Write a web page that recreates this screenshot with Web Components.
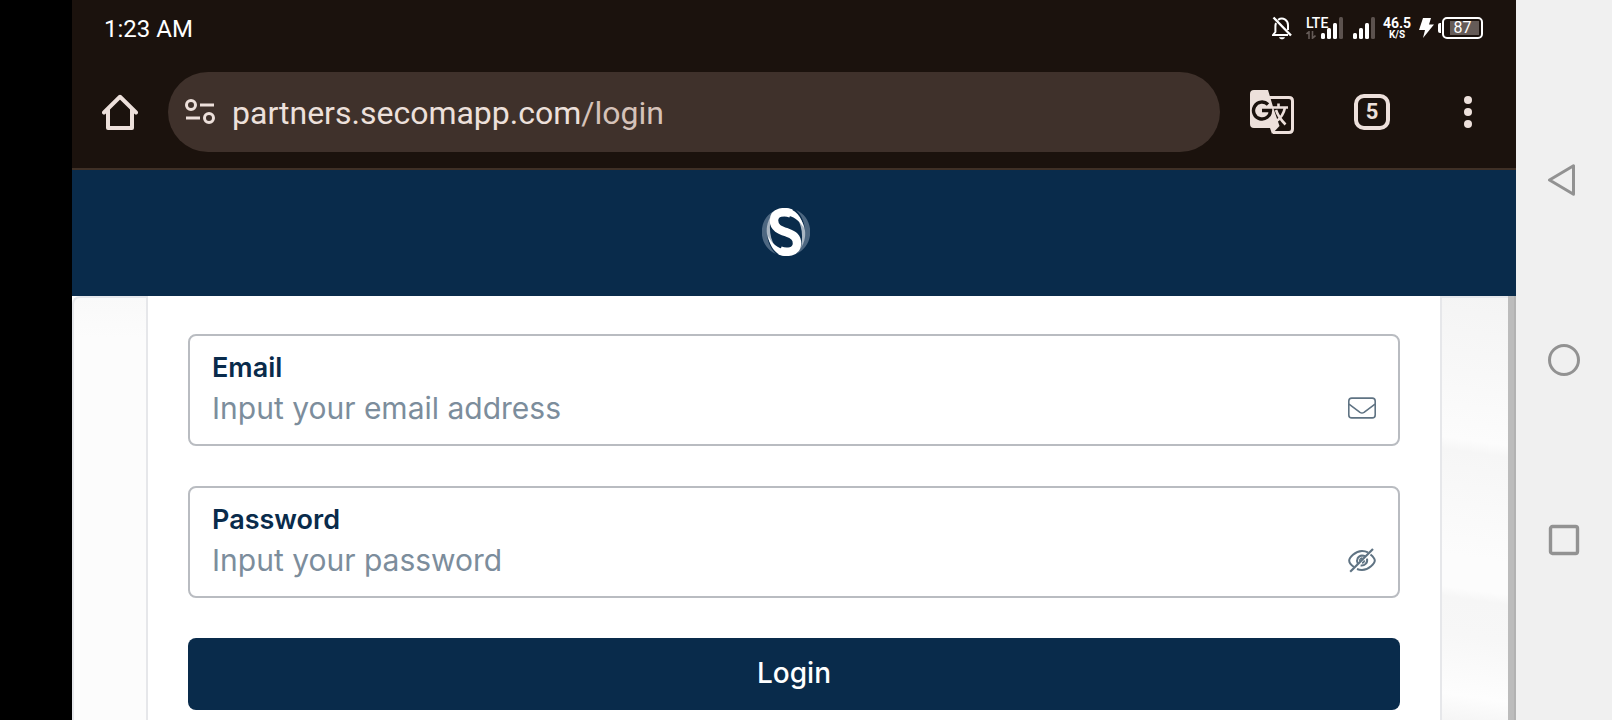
<!DOCTYPE html>
<html lang="en">
<head>
<meta charset="utf-8">
<meta name="viewport" content="width=device-width, initial-scale=1">
<title>Partners login</title>
<style>
    html, body {
        height: 100%;
        margin: 0;
        overflow: hidden;
    }
    body {
        font-family: Roboto, "Liberation Sans", sans-serif;
    }
</style>
</head>
<body>
<phone-frame>
    <status-bar time="1:23 AM" battery="87"></status-bar>
    <browser-toolbar host="partners.secomapp.com" path="/login" tabs="5"></browser-toolbar>
    <site-header></site-header>
    <login-page>
        <text-field name="email" type="email" label="Email" placeholder="Input your email address">
            <svg slot="icon" width="28" height="28" viewBox="0 0 28 28" fill="none" stroke="#5f7383" stroke-width="1.6" stroke-linejoin="round" aria-hidden="true">
                <rect x="0.8" y="4.1" width="26.4" height="19.8" rx="3"/>
                <path d="M1 10.2 L12 18.3 Q14 19.6 16 18.3 L27 10.2"/>
            </svg>
        </text-field>
        <text-field name="password" type="password" label="Password" placeholder="Input your password">
            <svg slot="icon" width="28" height="28" viewBox="0 0 28 28" fill="none" stroke="#5f7383" stroke-width="2" aria-hidden="true">
                <path d="M6 21 C3 19 1.2 16 1.2 14.5 C1.2 12 7 5 14 5 C16.4 5 18.5 5.600 20 6.400"/>
                <path d="M22.500 8.400 C25.300 10.700 26.800 13.200 26.800 14.500 C26.800 17 21 24 14 24 C12 24 10.400 23.600 9 23"/>
                <path d="M9.800 17.600 C7.800 14 10 9.600 14 9.400 C15 9.400 16 9.600 17 10.200"/>
                <path d="M19 12.600 C20 17 16.500 20 12.600 19.400"/>
                <path d="M11.800 14.800 C11.600 13 13 12 14.400 12.200 M16.400 14.400 C16.300 16 15.200 16.800 14 16.900" stroke-width="1.600"/>
                <path d="M2.200 25.800 L25 3" stroke-width="2.200"/>
            </svg>
        </text-field>
        <submit-button>Login</submit-button>
    </login-page>
    <system-nav slot="nav"></system-nav>
</phone-frame>

<script>
    class PhoneFrame extends HTMLElement {
        connectedCallback() {
            this.attachShadow({ mode: "open" });
            this.render();
        }
        render() {
            this.shadowRoot.innerHTML = `
                <style>
                    :host {
                        display: flex;
                        height: 100%;
                        padding-left: 72px;
                        box-sizing: border-box;
                        background: #000;
                    }
                    main {
                        flex: 1;
                        min-width: 0;
                        display: flex;
                        flex-direction: column;
                    }
                </style>
                <main><slot></slot></main>
                <slot name="nav"></slot>
            `;
        }
    }

    class StatusBar extends HTMLElement {
        connectedCallback() {
            this.attachShadow({ mode: "open" });
            this.render();
        }
        // last bar is always dimmed: three out of four
        bars() {
            return `
                <svg width="22" height="22" viewBox="0 0 22 22" aria-hidden="true">
                    <rect x="0" y="16" width="4" height="6" rx="1.5" fill="#fff"/>
                    <rect x="6" y="11" width="4" height="11" rx="1.5" fill="#fff"/>
                    <rect x="12" y="6" width="4" height="16" rx="1.5" fill="#fff"/>
                    <rect x="18" y="0" width="4" height="22" rx="1.5" fill="#5c524e"/>
                </svg>
            `;
        }
        render() {
            const time = this.getAttribute("time") ?? "";
            const battery = this.getAttribute("battery") ?? "";
            this.shadowRoot.innerHTML = `
                <style>
                    :host {
                        display: flex;
                        align-items: center;
                        justify-content: space-between;
                        height: 56px;
                        padding: 0 33px 0 32px;
                        background: #1b120d;
                        color: #fff;
                    }
                    svg {
                        display: block;
                    }
                    time {
                        padding-top: 2px;
                        font-size: 24px;
                        line-height: 28px;
                    }
                    .icons {
                        display: flex;
                        align-items: center;
                        gap: 8px;
                    }
                    .lte {
                        display: flex;
                        align-items: flex-end;
                        margin: 0 2px 0 6px;
                    }
                    .stack {
                        display: flex;
                        flex-direction: column;
                        gap: 2px;
                        font-size: 14px;
                        line-height: 12px;
                        font-weight: 700;
                    }
                    .lte .stack {
                        width: 15px;
                        font-weight: 500;
                    }
                    .speed {
                        align-items: center;
                        width: 28px;
                        gap: 0;
                        line-height: 14px;
                    }
                    .speed small {
                        font-size: 10px;
                        line-height: 10px;
                    }
                    .power {
                        display: flex;
                        align-items: center;
                        gap: 4px;
                    }
                    .battery {
                        display: flex;
                        align-items: center;
                        gap: 1px;
                    }
                    .battery::before {
                        content: "";
                        width: 3px;
                        height: 10px;
                        border-radius: 2px 0 0 2px;
                        background: #fff;
                    }
                    .battery span {
                        width: 37px;
                        height: 18px;
                        border: 2px solid #fff;
                        border-radius: 5px;
                        background: linear-gradient(#655b57, #655b57) 6px 2px / 29px 14px no-repeat;
                        font-size: 16px;
                        line-height: 18px;
                        text-align: center;
                    }
                </style>
                <time>${time}</time>
                <div class="icons">
                    <svg width="20" height="24" viewBox="0 0 20 24" fill="none" stroke="#fff" stroke-width="2" aria-hidden="true">
                        <path d="M6 3.8 C11 0.8 16 4 16 9 L16 14"/>
                        <path d="M4 7 C3.4 8.4 3.4 10 3.4 11.5 L3.4 16 L1 19 L16 19"/>
                        <path d="M1.5 1.5 L19 19.5" stroke-width="2.4"/>
                        <path d="M7 21.2 H13 C12 24 8 24 7 21.2 Z" fill="#fff" stroke="none"/>
                    </svg>
                    <div class="lte">
                        <div class="stack">
                            <span>LTE</span>
                            <svg width="10" height="8" viewBox="0 0 10 8" fill="none" stroke="#655b57" stroke-width="1.6" aria-hidden="true">
                                <path d="M0.5 3 L3 0.8 V8 M6.5 0 V7.2 L9.5 4.5"/>
                            </svg>
                        </div>
                        ${this.bars()}
                    </div>
                    ${this.bars()}
                    <div class="stack speed">
                        <span>46.5</span>
                        <small>K/S</small>
                    </div>
                    <div class="power">
                        <svg width="15" height="20" viewBox="0 0 15 20" fill="#fff" aria-hidden="true">
                            <path d="M4 0 H12 L10 6.500 H15 L4 20 L6 12 H0 Z"/>
                        </svg>
                        <div class="battery"><span>${battery}</span></div>
                    </div>
                </div>
            `;
        }
    }

    class BrowserToolbar extends HTMLElement {
        connectedCallback() {
            this.attachShadow({ mode: "open" });
            this.render();
        }
        render() {
            const host = this.getAttribute("host") ?? "";
            const path = this.getAttribute("path") ?? "";
            const tabs = this.getAttribute("tabs") ?? "1";
            this.shadowRoot.innerHTML = `
                <style>
                    :host {
                        display: flex;
                        align-items: center;
                        padding: 16px 0;
                        border-bottom: 2px solid #3f3026;
                        background: #1b120d;
                        color: #ede0db;
                    }
                    button {
                        display: grid;
                        place-items: center;
                        width: 96px;
                        height: 48px;
                        padding: 0;
                        border: 0;
                        background: none;
                        color: inherit;
                        font: inherit;
                    }
                    svg {
                        display: block;
                    }
                    .address {
                        flex: 1;
                        display: flex;
                        align-items: center;
                        height: 80px;
                        box-sizing: border-box;
                        border-radius: 40px;
                        background: #3f312b;
                    }
                    .address button {
                        width: 64px;
                    }
                    .url {
                        flex: 1;
                        padding-top: 2px;
                        outline: none;
                        font-size: 32px;
                        line-height: 40px;
                        white-space: nowrap;
                    }
                    .path {
                        color: #d5c2b9;
                    }
                    .actions {
                        display: flex;
                    }
                    .actions .translate {
                        width: 104px;
                    }
                    .count {
                        display: grid;
                        place-items: center;
                        width: 28px;
                        height: 28px;
                        border: 4px solid;
                        border-radius: 10px;
                        font-size: 22px;
                        font-weight: 700;
                        line-height: 28px;
                    }
                </style>
                <button aria-label="Home">
                    <svg width="36" height="36" viewBox="0 0 36 36" fill="none" stroke="currentColor" stroke-width="4" stroke-linejoin="round" aria-hidden="true">
                        <path d="M6 15 V34 H30 V15"/>
                        <path d="M2 18.500 L18 2.800 L34 18.500" stroke-linecap="round"/>
                    </svg>
                </button>
                <div class="address">
                    <button aria-label="Site information">
                        <svg width="32" height="26" viewBox="0 0 32 26" fill="none" stroke="currentColor" stroke-width="3" aria-hidden="true">
                            <circle cx="7" cy="6" r="4.5"/>
                            <path d="M16 6 H30 M2 19 H16"/>
                            <circle cx="25" cy="19" r="4.5"/>
                        </svg>
                    </button>
                    <div class="url" role="textbox" contenteditable="true" spellcheck="false" aria-label="Address">${host}<span class="path">${path}</span></div>
                </div>
                <div class="actions">
                    <button class="translate" aria-label="Translate">
                        <svg width="44" height="44" viewBox="0 0 44 44" aria-hidden="true">
                            <path d="M19 7.500 H39 Q42.500 7.500 42.500 11 V39 Q42.500 42.500 39 42.500 H23" fill="none" stroke="currentColor" stroke-width="3"/>
                            <path d="M4 0 H18 L24 20 L29.500 36 L22 44 L20 38 H4 Q0 38 0 34 V4 Q0 0 4 0 Z" fill="currentColor"/>
                            <path d="M23 17.500 H38 M28.500 13.500 V17 M35 17.500 C34 23 31 28 26 31.500 M26 20 C28 26 31 30 35.500 34.500" fill="none" stroke="currentColor" stroke-width="2.600"/>
                            <path d="M18 14.500 A8.500 8.500 0 1 0 20.500 20.500 H12" fill="none" stroke="#1b120d" stroke-width="3.400"/>
                        </svg>
                    </button>
                    <button aria-label="Open tabs"><span class="count">${tabs}</span></button>
                    <button aria-label="Menu">
                        <svg width="8" height="32" viewBox="0 0 8 32" fill="currentColor" aria-hidden="true">
                            <circle cx="4" cy="4" r="4"/>
                            <circle cx="4" cy="16" r="4"/>
                            <circle cx="4" cy="28" r="4"/>
                        </svg>
                    </button>
                </div>
            `;
        }
    }

    class SiteHeader extends HTMLElement {
        connectedCallback() {
            this.attachShadow({ mode: "open" });
            this.render();
        }
        render() {
            this.shadowRoot.innerHTML = `
                <style>
                    :host {
                        display: flex;
                        justify-content: center;
                        padding: 38px 16px 40px 0;
                        background: #092b4b;
                    }
                    svg {
                        display: block;
                    }
                </style>
                <a href="#" aria-label="Home">
                    <svg width="48" height="48" viewBox="0 0 48 48" fill="none" aria-hidden="true">
                        <path d="M14 2 C-5 10 -5 38 14 46 C2 35 2 13 14 2 Z" fill="#4d6781"/>
                        <path d="M34 2 C53 10 53 38 34 46 C46 35 46 13 34 2 Z" fill="#4d6781"/>
                        <path d="M9 8 C1 20 4 38 20 46 C9 37 6 24 9 8 Z" fill="#a9b6c3"/>
                        <path d="M39 40 C47 28 44 10 28 2 C39 11 42 24 39 40 Z" fill="#a9b6c3"/>
                        <path d="M29 5.500 C23 3 12 3.500 12 12.500 C12 20 18 22 25 24.500 C32 27 35 29.500 35 35.500 C35 44.500 24 45 18 42.500" stroke="#fff" stroke-width="8.500"/>
                        <path d="M22 0 C34 0 40 10 42 20 C37 12 31 8 24 7.500 Z" fill="#fff"/>
                        <path d="M25 48 C13 48 8 38 6 28 C10 36 16 40.500 23 41 Z" fill="#fff"/>
                    </svg>
                </a>
            `;
        }
    }

    class LoginPage extends HTMLElement {
        connectedCallback() {
            this.attachShadow({ mode: "open" });
            this.render();
        }
        render() {
            this.shadowRoot.innerHTML = `
                <style>
                    :host {
                        flex: 1;
                        min-height: 0;
                        display: flex;
                        overflow: hidden;
                        background: #fff;
                        font-family: Inter, "Open Sans", sans-serif;
                    }
                    .side {
                        flex: none;
                        box-sizing: border-box;
                        width: 74px;
                        border: solid #e6e8ec;
                        border-width: 2px 0 0 2px;
                        border-top-left-radius: 8px;
                        background: linear-gradient(#f9f9f9, #fcfcfc 40px);
                    }
                    .side.right {
                        width: 66px;
                        border-left: 0;
                        border-radius: 0;
                        background: linear-gradient(188deg, #f4f4f4, #f8f8f8 80px, #fcfcfc 146px, #f6f6f6 158px, #fcfcfc 262px, #fcfcfc 294px, #f6f6f6 304px, #f7f7f7 340px, #fdfdfd 400px, #f5f5f5);
                    }
                    form {
                        flex: 1;
                        display: flex;
                        flex-direction: column;
                        gap: 40px;
                        padding: 38px 40px 0;
                        border: solid #e6e7ea;
                        border-width: 0 2px;
                    }
                    .scrollbar {
                        flex: none;
                        box-sizing: border-box;
                        width: 8px;
                        border-right: 2px solid #b2b2b2;
                        background: #bcbcbc;
                    }
                </style>
                <div class="side"></div>
                <form><slot></slot></form>
                <div class="side right"></div>
                <div class="scrollbar"></div>
            `;
        }
    }

    class TextField extends HTMLElement {
        connectedCallback() {
            this.attachShadow({ mode: "open" });
            this.render();
        }
        render() {
            const name = this.getAttribute("name") ?? "field";
            const type = this.getAttribute("type") ?? "text";
            const label = this.getAttribute("label") ?? "";
            const placeholder = this.getAttribute("placeholder") ?? "";
            this.shadowRoot.innerHTML = `
                <style>
                    :host {
                        display: block;
                        padding: 14px 22px;
                        border: 2px solid #b9bcc1;
                        border-radius: 8px;
                        background: #fff;
                    }
                    label {
                        display: block;
                        color: #092b4b;
                        font-size: 27px;
                        font-weight: 600;
                        line-height: 36px;
                    }
                    .row {
                        display: flex;
                        align-items: center;
                        height: 44px;
                    }
                    input {
                        flex: 1;
                        min-width: 0;
                        height: 44px;
                        padding: 0;
                        border: 0;
                        outline: none;
                        background: none;
                        color: #092b4b;
                        font: inherit;
                        font-size: 30px;
                    }
                    input::placeholder {
                        color: #7c8d9c;
                        opacity: 1;
                    }
                </style>
                <label for="${name}">${label}</label>
                <div class="row">
                    <input id="${name}" name="${name}" type="${type}" placeholder="${placeholder}">
                    <slot name="icon"></slot>
                </div>
            `;
        }
    }

    class SubmitButton extends HTMLElement {
        connectedCallback() {
            this.attachShadow({ mode: "open" });
            this.render();
        }
        render() {
            this.shadowRoot.innerHTML = `
                <style>
                    :host {
                        display: block;
                    }
                    button {
                        display: block;
                        width: 100%;
                        height: 72px;
                        padding: 0 0 2px;
                        border: 0;
                        border-radius: 8px;
                        background: #092b4b;
                        color: #fff;
                        font: inherit;
                        font-size: 28px;
                        font-weight: 500;
                    }
                </style>
                <button type="submit"><slot></slot></button>
            `;
        }
    }

    class SystemNav extends HTMLElement {
        connectedCallback() {
            this.attachShadow({ mode: "open" });
            this.render();
        }
        render() {
            this.shadowRoot.innerHTML = `
                <style>
                    :host {
                        flex: none;
                        width: 96px;
                        background: #f0f0f0;
                    }
                    nav {
                        display: flex;
                        flex-direction: column;
                        justify-content: center;
                        height: 100%;
                    }
                    button {
                        display: grid;
                        place-items: center;
                        height: 25%;
                        padding: 0;
                        border: 0;
                        background: none;
                    }
                </style>
                <nav>
                    <button aria-label="Back">
                        <svg width="32" height="32" viewBox="0 0 32 32" fill="none" stroke="#929292" stroke-width="3" stroke-linejoin="round" aria-hidden="true">
                            <path d="M1.500 16 L25.500 1.800 V30.200 Z"/>
                        </svg>
                    </button>
                    <button aria-label="Home">
                        <svg width="32" height="32" viewBox="0 0 32 32" fill="none" stroke="#929292" stroke-width="3" aria-hidden="true">
                            <circle cx="16" cy="16" r="14.500"/>
                        </svg>
                    </button>
                    <button aria-label="Recent apps">
                        <svg width="32" height="32" viewBox="0 0 32 32" fill="none" stroke="#929292" stroke-width="3.400" aria-hidden="true">
                            <rect x="2.500" y="2.500" width="27" height="27" rx="2"/>
                        </svg>
                    </button>
                </nav>
            `;
        }
    }

    customElements.define("phone-frame", PhoneFrame);
    customElements.define("status-bar", StatusBar);
    customElements.define("browser-toolbar", BrowserToolbar);
    customElements.define("site-header", SiteHeader);
    customElements.define("login-page", LoginPage);
    customElements.define("text-field", TextField);
    customElements.define("submit-button", SubmitButton);
    customElements.define("system-nav", SystemNav);
</script>
</body>
</html>
